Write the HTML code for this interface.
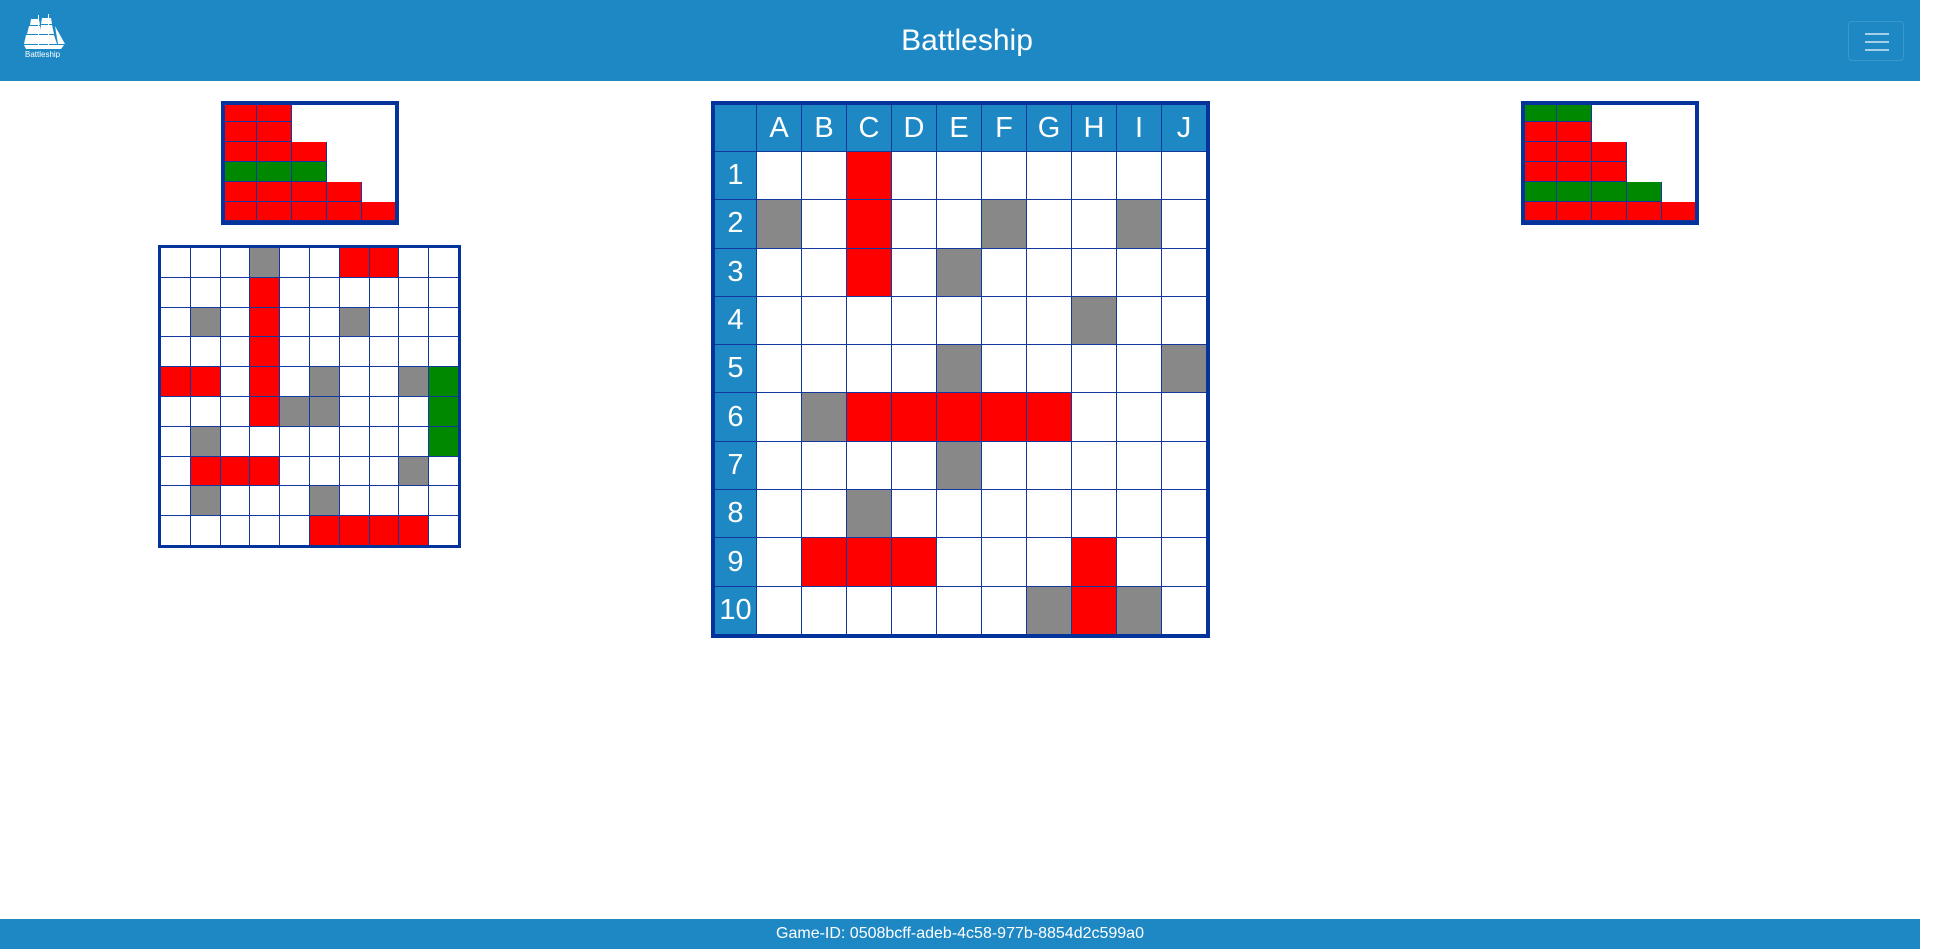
<!DOCTYPE html>
<html><head><meta charset="utf-8">
<style>
*{margin:0;padding:0;box-sizing:border-box}
html,body{width:1935px;height:949px;background:#fff;overflow:hidden;font-family:"Liberation Sans",Arial,sans-serif}
.hdr{position:absolute;left:0;top:0;width:1920px;height:81px;background:#1e88c4}
.title{position:absolute;left:7px;width:1920px;top:20px;text-align:center;color:#fff;font-size:30px;line-height:42px}
.btn{position:absolute;left:1848px;top:21px;width:56px;height:40px;border:1px solid rgba(255,255,255,.13);border-radius:4px}
.btn i{position:absolute;left:16px;width:24px;height:2px;background:rgba(255,255,255,.6)}
.ftr{position:absolute;left:0;top:919px;width:1920px;height:30px;background:#1e88c4;color:#fff;text-align:center;font-size:16px;line-height:30px}
.big{position:absolute;left:711px;top:101px;border:4px solid #05339c;background:#1238a0;display:grid;grid-template-columns:41px repeat(10,44px);grid-template-rows:46px repeat(10,47.3px);gap:1px;width:499px;height:537px}
.big div{background:#fff}
.big .h{background:#1e88c4;color:#fff;font-size:29px;display:flex;align-items:center;justify-content:center}
.small{position:absolute;left:158px;top:245px;border:3px solid #05339c;background:#1238a0;display:grid;grid-template-columns:repeat(10,1fr);grid-template-rows:repeat(10,1fr);gap:1px;width:303px;height:303px}
.small div{background:#fff}
.big .r,.small .r{background:#ff0000}
.big .g,.small .g{background:#888}
.small .G{background:#008800}
.ships{position:absolute;width:178px;height:124px;border:4px solid #05339c;background:#fff}
.ships div{position:absolute;border-right:1px solid #1238a0;border-bottom:1px solid #1238a0}
.ships .r{background:#ff0000}.ships .G{background:#008800}
</style></head><body>
<div class="hdr">
<svg style="position:absolute;left:22px;top:14px" width="48" height="44" viewBox="0 0 48 44">
<g fill="#fff">
<path d="M9 5h8l1 6H8z"/><path d="M20 4h9l1 6H19z"/>
<path d="M7 12h11l1 8H5z"/><path d="M19 11h11l2 9H18z"/>
<path d="M4 21h15l1 9H2z"/><path d="M18 21h14l3 9H18z"/>
<path d="M33 12l10 18h-7z"/>
<path d="M2 31h40l-3 4H4z"/>
</g>
<rect x="16" y="1" width="1" height="34" fill="#fff"/><rect x="26" y="0" width="1" height="34" fill="#fff"/>
<text x="3" y="43" font-size="8" fill="#fff" font-family="Liberation Sans, sans-serif">Battleship</text>
</svg>
<div class="title">Battleship</div>
<div class="btn"><i style="top:11px"></i><i style="top:19px"></i><i style="top:27px"></i></div>
</div>

<div class="ships" style="left:221px;top:101px">
<div class="r" style="left:0;top:0;width:32px;height:17px"></div><div class="r" style="left:32px;top:0;width:35px;height:17px"></div>
<div class="r" style="left:0;top:17px;width:32px;height:20px"></div><div class="r" style="left:32px;top:17px;width:35px;height:20px"></div>
<div class="r" style="left:0;top:37px;width:32px;height:20px"></div><div class="r" style="left:32px;top:37px;width:35px;height:20px"></div><div class="r" style="left:67px;top:37px;width:35px;height:20px"></div>
<div class="G" style="left:0;top:57px;width:32px;height:20px"></div><div class="G" style="left:32px;top:57px;width:35px;height:20px"></div><div class="G" style="left:67px;top:57px;width:35px;height:20px"></div>
<div class="r" style="left:0;top:77px;width:32px;height:20px"></div><div class="r" style="left:32px;top:77px;width:35px;height:20px"></div><div class="r" style="left:67px;top:77px;width:35px;height:20px"></div><div class="r" style="left:102px;top:77px;width:35px;height:20px"></div>
<div class="r" style="left:0;top:97px;width:32px;height:19px"></div><div class="r" style="left:32px;top:97px;width:35px;height:19px"></div><div class="r" style="left:67px;top:97px;width:35px;height:19px"></div><div class="r" style="left:102px;top:97px;width:35px;height:19px"></div><div class="r" style="left:137px;top:97px;width:33px;height:19px;border-right:0"></div>
</div>

<div class="ships" style="left:1521px;top:101px">
<div class="G" style="left:0;top:0;width:32px;height:17px"></div><div class="G" style="left:32px;top:0;width:35px;height:17px"></div>
<div class="r" style="left:0;top:17px;width:32px;height:20px"></div><div class="r" style="left:32px;top:17px;width:35px;height:20px"></div>
<div class="r" style="left:0;top:37px;width:32px;height:20px"></div><div class="r" style="left:32px;top:37px;width:35px;height:20px"></div><div class="r" style="left:67px;top:37px;width:35px;height:20px"></div>
<div class="r" style="left:0;top:57px;width:32px;height:20px"></div><div class="r" style="left:32px;top:57px;width:35px;height:20px"></div><div class="r" style="left:67px;top:57px;width:35px;height:20px"></div>
<div class="G" style="left:0;top:77px;width:32px;height:20px"></div><div class="G" style="left:32px;top:77px;width:35px;height:20px"></div><div class="G" style="left:67px;top:77px;width:35px;height:20px"></div><div class="G" style="left:102px;top:77px;width:35px;height:20px"></div>
<div class="r" style="left:0;top:97px;width:32px;height:19px"></div><div class="r" style="left:32px;top:97px;width:35px;height:19px"></div><div class="r" style="left:67px;top:97px;width:35px;height:19px"></div><div class="r" style="left:102px;top:97px;width:35px;height:19px"></div><div class="r" style="left:137px;top:97px;width:33px;height:19px;border-right:0"></div>
</div>

<div class="small">
<div></div><div></div><div></div><div class="g"></div><div></div><div></div><div class="r"></div><div class="r"></div><div></div><div></div>
<div></div><div></div><div></div><div class="r"></div><div></div><div></div><div></div><div></div><div></div><div></div>
<div></div><div class="g"></div><div></div><div class="r"></div><div></div><div></div><div class="g"></div><div></div><div></div><div></div>
<div></div><div></div><div></div><div class="r"></div><div></div><div></div><div></div><div></div><div></div><div></div>
<div class="r"></div><div class="r"></div><div></div><div class="r"></div><div></div><div class="g"></div><div></div><div></div><div class="g"></div><div class="G"></div>
<div></div><div></div><div></div><div class="r"></div><div class="g"></div><div class="g"></div><div></div><div></div><div></div><div class="G"></div>
<div></div><div class="g"></div><div></div><div></div><div></div><div></div><div></div><div></div><div></div><div class="G"></div>
<div></div><div class="r"></div><div class="r"></div><div class="r"></div><div></div><div></div><div></div><div></div><div class="g"></div><div></div>
<div></div><div class="g"></div><div></div><div></div><div></div><div class="g"></div><div></div><div></div><div></div><div></div>
<div></div><div></div><div></div><div></div><div></div><div class="r"></div><div class="r"></div><div class="r"></div><div class="r"></div><div></div>
</div>

<div class="big">
<div class="h"></div><div class="h">A</div><div class="h">B</div><div class="h">C</div><div class="h">D</div><div class="h">E</div><div class="h">F</div><div class="h">G</div><div class="h">H</div><div class="h">I</div><div class="h">J</div>
<div class="h">1</div><div></div><div></div><div class="r"></div><div></div><div></div><div></div><div></div><div></div><div></div><div></div>
<div class="h">2</div><div class="g"></div><div></div><div class="r"></div><div></div><div></div><div class="g"></div><div></div><div></div><div class="g"></div><div></div>
<div class="h">3</div><div></div><div></div><div class="r"></div><div></div><div class="g"></div><div></div><div></div><div></div><div></div><div></div>
<div class="h">4</div><div></div><div></div><div></div><div></div><div></div><div></div><div></div><div class="g"></div><div></div><div></div>
<div class="h">5</div><div></div><div></div><div></div><div></div><div class="g"></div><div></div><div></div><div></div><div></div><div class="g"></div>
<div class="h">6</div><div></div><div class="g"></div><div class="r"></div><div class="r"></div><div class="r"></div><div class="r"></div><div class="r"></div><div></div><div></div><div></div>
<div class="h">7</div><div></div><div></div><div></div><div></div><div class="g"></div><div></div><div></div><div></div><div></div><div></div>
<div class="h">8</div><div></div><div></div><div class="g"></div><div></div><div></div><div></div><div></div><div></div><div></div><div></div>
<div class="h">9</div><div></div><div class="r"></div><div class="r"></div><div class="r"></div><div></div><div></div><div></div><div class="r"></div><div></div><div></div>
<div class="h">10</div><div></div><div></div><div></div><div></div><div></div><div></div><div class="g"></div><div class="r"></div><div class="g"></div><div></div>
</div>

<div class="ftr">Game-ID: 0508bcff-adeb-4c58-977b-8854d2c599a0</div>
</body></html>
